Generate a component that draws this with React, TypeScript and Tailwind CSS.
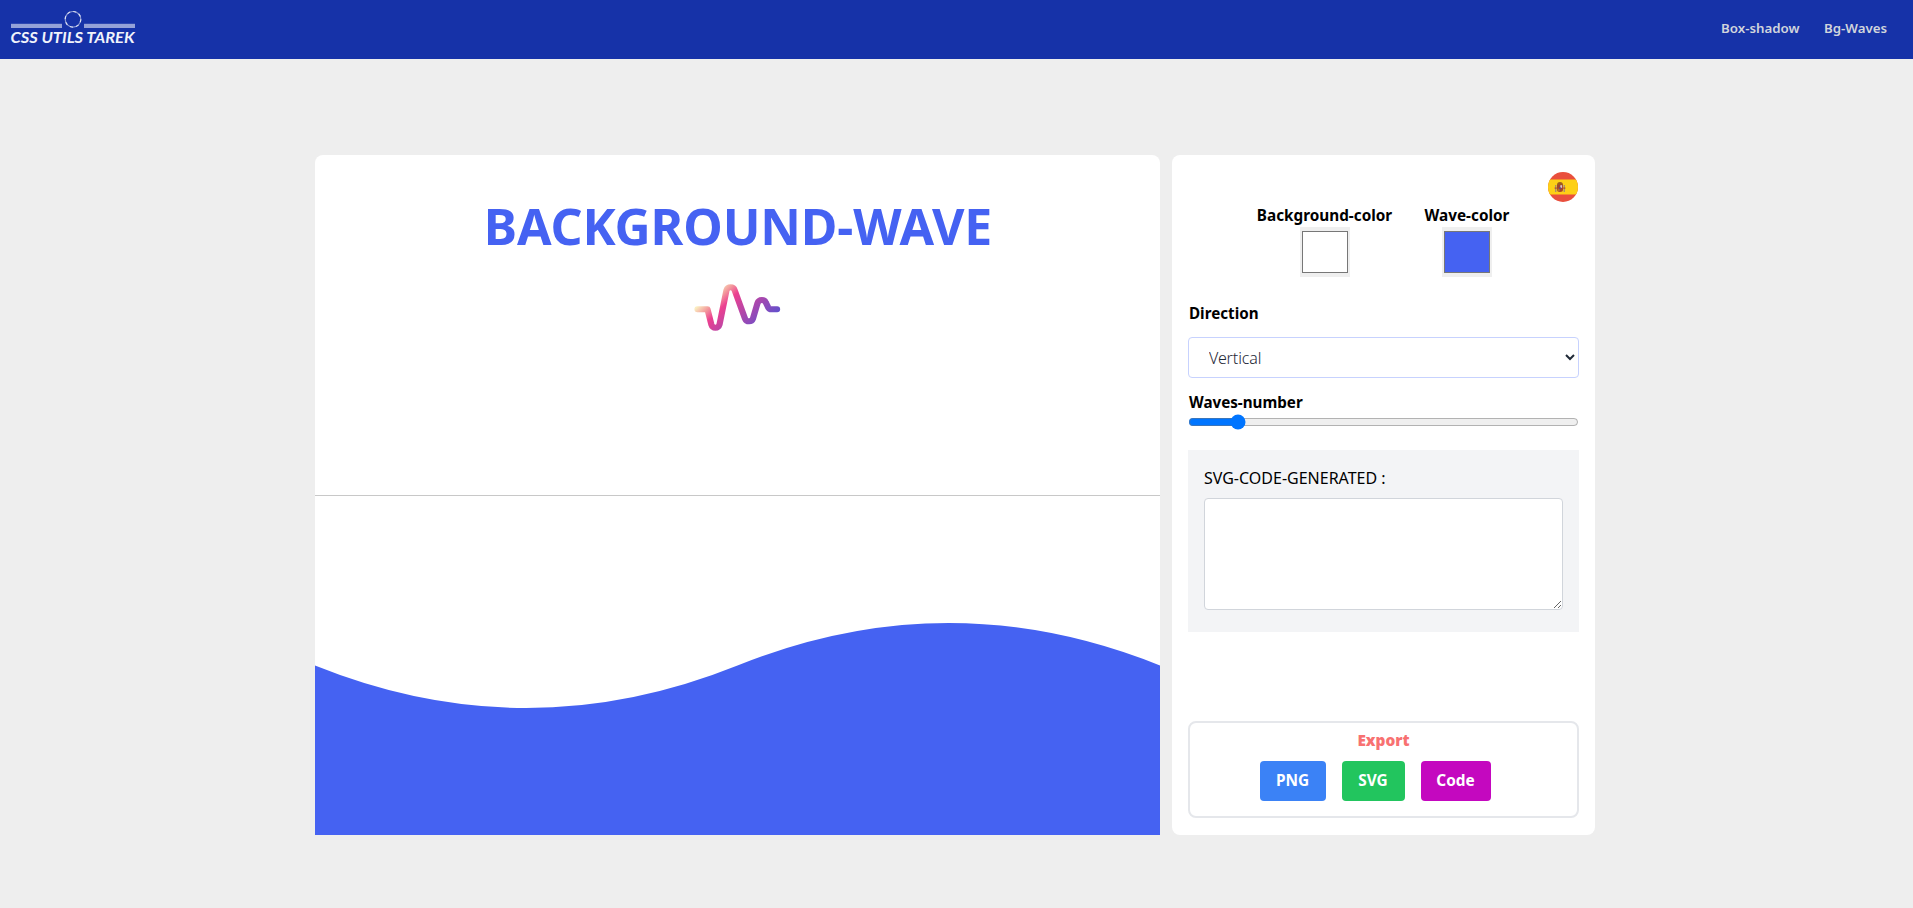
import { useState } from "react";

function Logo() {
  return (
    <svg width="130" height="40" viewBox="0 0 130 40" className="block">
      <g fill="#ffffff" fillOpacity="0.55">
        <rect x="3" y="15.8" width="51" height="4.2" />
        <rect x="76" y="15.8" width="51" height="4.2" />
      </g>
      <circle cx="65" cy="11.3" r="7.8" fill="none" stroke="#ffffff" strokeOpacity="0.5" strokeWidth="1.2" />
      <circle cx="65" cy="11.3" r="7.8" fill="none" stroke="#ffffff" strokeOpacity="0.75" strokeWidth="1.2" strokeDasharray="3 3.13" />
      <text
        x="2.5"
        y="34.5"
        textLength="124"
        lengthAdjust="spacingAndGlyphs"
        fill="#f1f3fb"
        className="font-['Lato',sans-serif] text-[16px] font-bold italic"
      >
        CSS UTILS TAREK
      </text>
    </svg>
  );
}

function WaveIcon() {
  return (
    <svg width="93" height="54" viewBox="645 270 270 162" preserveAspectRatio="none" className="block">
      <defs>
        <linearGradient id="pulse" gradientUnits="userSpaceOnUse" x1="660" y1="350" x2="785" y2="475">
          <stop offset="0" stopColor="#faedc0" />
          <stop offset="0.15" stopColor="#f39a9c" />
          <stop offset="0.3" stopColor="#ec4090" />
          <stop offset="1" stopColor="#6450cc" />
        </linearGradient>
      </defs>
      <path
        d="M661 358 H690 L701 403 Q704 413 713 413 Q722 413 725 403 L745 301 Q748 292 757 292 Q766 292 769 301 L799 386 Q802 394 811 394 Q819 394 822 386 L835 340 Q838 330 848 330 Q856 330 859 337 L866 352 Q869 358 876 358 H892"
        fill="none"
        stroke="url(#pulse)"
        strokeWidth="18"
        strokeLinecap="round"
        strokeLinejoin="round"
      />
    </svg>
  );
}

function SpainFlag() {
  return (
    <svg width="30" height="30" viewBox="0 0 30 30" className="block">
      <clipPath id="flag">
        <circle cx="15" cy="15" r="15" />
      </clipPath>
      <g clipPath="url(#flag)">
        <rect width="30" height="30" fill="#e94f3d" />
        <rect y="7.5" width="30" height="15" fill="#fdd017" />
        <rect x="7" y="13" width="1.4" height="7" fill="#a9906c" />
        <rect x="15.6" y="13" width="1.4" height="7" fill="#a9906c" />
        <rect x="6.6" y="15.5" width="2.2" height="1.2" fill="#b5482e" />
        <rect x="15.2" y="15.5" width="2.2" height="1.2" fill="#b5482e" />
        <path d="M9 13 Q9 10 12 10 Q15 10 15 13 Z" fill="#9c5a20" />
        <path d="M9 13 H15 V17.5 Q15 20 12 20 Q9 20 9 17.5 Z" fill="#a5452b" />
        <rect x="12.3" y="13.2" width="1.8" height="2.6" fill="#d9c7cf" />
        <rect x="9.6" y="16.6" width="2.2" height="2.4" fill="#b5702a" />
        <circle cx="12" cy="16.2" r="1" fill="#5b4a86" />
      </g>
    </svg>
  );
}

export default function App() {
  const [background, setBackground] = useState("#ffffff");
  const [wave, setWave] = useState("#4562f2");
  const [count, setCount] = useState(2);

  return (
    <div className="flex h-screen flex-col overflow-hidden bg-[#eeeeee] font-['Noto_Sans',sans-serif] text-base text-black">
      <header className="flex h-[59px] shrink-0 items-start justify-between bg-[#1632a8] pr-[26px] pl-2">
        <div className="pt-2">
          <Logo />
        </div>
        <nav className="flex gap-6 pt-[18px] text-[13.3px] leading-5 font-semibold text-gray-300">
          <a className="w-[79px] whitespace-nowrap">Box-shadow</a>
          <a className="w-[63px] whitespace-nowrap">Bg-Waves</a>
        </nav>
      </header>

      <main className="flex gap-3 pt-24 pl-[315px]">
        <section className="flex h-[680px] w-[845px] flex-col overflow-hidden rounded-t-lg" style={{ background }}>
          <div className="flex h-[341px] shrink-0 flex-col items-center border-b border-[#c8c8c8] pt-[39px]">
            <h1 className="pl-px text-[50px] leading-[64px] font-bold tracking-[-0.12px] whitespace-nowrap text-[#4562f2]">
              BACKGROUND-WAVE
            </h1>
            <div className="pt-[22px] pr-[7px] pl-2">
              <WaveIcon />
            </div>
          </div>
          <svg viewBox="0 0 845 339" className="block h-[339px] w-full">
            <path d="M0 169.5 Q211.25 254.5 422.5 169.5 T845 169.5 V339 H0 Z" fill={wave} />
          </svg>
        </section>

        <aside className="flex h-[680px] w-[423px] flex-col rounded-lg bg-white px-4 pt-[17px] pb-[17px]">
          <div className="flex h-[30px] justify-end pr-[1px]">
            <SpainFlag />
          </div>

          <div className="flex h-[75px] justify-center gap-8">
            <label className="flex w-[135px] flex-col items-center">
              <span className="h-[25px] text-[15.3px] leading-[26px] font-bold whitespace-nowrap">Background-color</span>
              <input type="color" value={background} onChange={(e) => setBackground(e.target.value)} className="block h-[50px] w-[50px] bg-[#efefef]" />
            </label>
            <label className="flex w-[86px] flex-col items-center">
              <span className="h-[25px] text-[15.3px] leading-[26px] font-bold whitespace-nowrap">Wave-color</span>
              <input type="color" value={wave} onChange={(e) => setWave(e.target.value)} className="block h-[50px] w-[50px] bg-[#efefef]" />
            </label>
          </div>

          <div className="mt-6 h-9 pl-px text-[15.2px] leading-6 font-bold">Direction</div>
          <select className="block h-[41px] w-full shrink-0 rounded border border-[#c7d2fe] bg-white pr-px pl-4 font-light tracking-[-0.1px] text-[#1f2937]">
            <option>Vertical</option>
            <option>Horizontal</option>
          </select>

          <div className="mt-3 h-6 pl-px text-[15.2px] leading-6 font-bold">Waves-number</div>
          <input
            type="range"
            min={1}
            max={10}
            value={count}
            onChange={(e) => setCount(Number(e.target.value))}
            className="block h-4 w-full accent-[#0075ff]"
          />

          <div className="mt-5 flex h-[182px] shrink-0 flex-col bg-[#f3f4f6] px-4 pt-4">
            <span className="h-8 leading-6">SVG-CODE-GENERATED :</span>
            <textarea className="block h-[112px] w-full shrink-0 rounded border border-[#d1d5db] bg-white" />
          </div>

          <div className="mt-auto flex h-[97px] shrink-0 flex-col items-center rounded-lg border-2 border-[#e5e7eb] pt-[6px]">
            <span className="h-8 text-[15.4px] leading-6 font-black text-[#f87171]">Export</span>
            <div className="flex gap-4 pr-[17px] text-[15.4px] font-bold text-white">
              <button className="h-10 w-[66px] rounded bg-[#3b82f6]">PNG</button>
              <button className="h-10 w-[63px] rounded bg-[#22c55e]">SVG</button>
              <button className="h-10 w-[70px] rounded bg-[#c408bf]">Code</button>
            </div>
          </div>
        </aside>
      </main>
    </div>
  );
}
